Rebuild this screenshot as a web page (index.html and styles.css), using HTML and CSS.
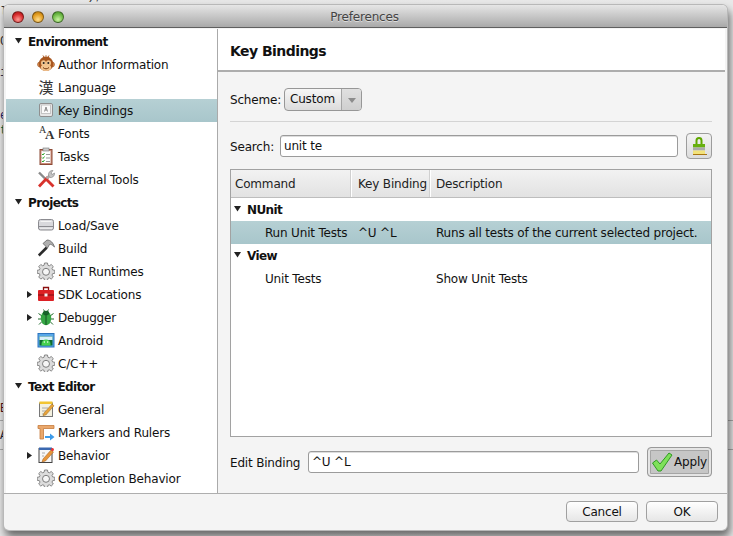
FILE: index.html
```html
<!DOCTYPE html>
<html lang="en">
<head>
<meta charset="utf-8">
<title>Preferences</title>
<link rel="stylesheet" href="styles.css">
</head>
<body>
<div class="desktop">
  <div class="bg-text bg-a">0 1 Failure);</div>
  <div class="bg-text bg-b">l</div>
  <div class="bg-text bg-c">C</div>
  <div class="bg-text bg-d">i</div>
  <div class="bg-text bg-e">e</div>
  <div class="bg-text bg-f">t</div>
  <div class="bg-text bg-g">E</div>
  <div class="bg-text bg-h">A</div>
  <div class="bg-line bg-l1"></div>
  <div class="bg-line bg-l2"></div>

  <div class="window">
    <div class="titlebar">
      <div class="lights">
        <span class="light red"></span><span class="light yellow"></span><span class="light green"></span>
      </div>
      <div class="title">Preferences</div>
    </div>

    <div class="main">
      <nav class="sidebar">
        <div class="row group"><svg class="tri" viewBox="0 0 9 9"><path d="M1 2h7L4.500 7.500z"/></svg><b>Environment</b></div>
        <div class="row item">
          <svg class="ico" viewBox="0 0 18 18"><circle cx="2.800" cy="9.500" r="2.400" fill="#d98a4e" stroke="#8a4a1c" stroke-width=".5"/><circle cx="15.200" cy="9.500" r="2.400" fill="#d98a4e" stroke="#8a4a1c" stroke-width=".5"/><circle cx="9" cy="8.800" r="7.300" fill="#a8561f"/><path d="M7 2L6 .5M9 1.500V.3M11 2l1-1.500" stroke="#a8561f"/><ellipse cx="6.500" cy="8" rx="2.500" ry="2.800" fill="#f3c48f"/><ellipse cx="11.500" cy="8" rx="2.500" ry="2.800" fill="#f3c48f"/><ellipse cx="9" cy="12.500" rx="5.200" ry="3.400" fill="#f3c48f"/><circle cx="6.700" cy="8" r="1" fill="#222"/><circle cx="11.300" cy="8" r="1" fill="#222"/><path d="M6 12.500c1.800 1.800 4.200 1.800 6 0" stroke="#7a3a10" fill="none"/></svg>
          <span>Author Information</span></div>
        <div class="row item"><span class="ico glyph-han">漢</span><span>Language</span></div>
        <div class="row item selected">
          <svg class="ico" viewBox="0 0 18 18"><rect x="2.500" y="2.500" width="13" height="13" rx="1.500" fill="#e6e6e6" stroke="#8f8f8f"/><rect x="4.500" y="4" width="9" height="8.500" fill="#fafafa" stroke="#c4c4c4"/><path d="M7.500 10.500L9 6l1.500 4.500M8 9h2" fill="none" stroke="#777" stroke-width=".8"/></svg>
          <span>Key Bindings</span></div>
        <div class="row item"><span class="ico glyph-aa"><i>A</i><em>A</em></span><span>Fonts</span></div>
        <div class="row item">
          <svg class="ico" viewBox="0 0 18 18"><rect x="3" y="2.500" width="12" height="15" fill="#c98b78" stroke="#8c4a36"/><rect x="4.500" y="4" width="9" height="12" fill="#fff"/><rect x="6" y="1" width="6" height="3" fill="#ccc" stroke="#777" stroke-width=".6"/><path d="M5 7l1 1 1.500-2M5 10.500l1 1 1.500-2M5 14l1 1 1.500-2" fill="none" stroke="#2aa52a"/><path d="M9 7.500h4M9 11h4M9 14.500h4" stroke="#999"/></svg>
          <span>Tasks</span></div>
        <div class="row item">
          <svg class="ico" viewBox="0 0 18 18"><path d="M2 2.500l6 6" stroke="#8a8a8a" stroke-width="2.400"/><path d="M9 9l7.500 7.500" stroke="#d8322c" stroke-width="2.800"/><path d="M11 7L2 16.500" stroke="#d8322c" stroke-width="2.800"/><path d="M14.500 3.500L9.500 8.500" stroke="#aaa" stroke-width="2.400"/><path d="M11.500 5a4 4 0 0 1 4.500-4.500l-2 2.500 1 1.500 2.500-1.500a4 4 0 0 1-5 4.500z" fill="#c4c4c4" stroke="#808080" stroke-width=".6"/></svg>
          <span>External Tools</span></div>

        <div class="row group"><svg class="tri" viewBox="0 0 9 9"><path d="M1 2h7L4.500 7.500z"/></svg><b>Projects</b></div>
        <div class="row item">
          <svg class="ico" viewBox="0 0 18 18"><rect x="1.500" y="3.500" width="15" height="10.500" rx="2" fill="#d8d8dc" stroke="#8b8b90"/><path d="M2 10.500h14" stroke="#8b8b90"/><path d="M3.500 5.500h11" stroke="#f4f4f4"/><path d="M3 12.300h12" stroke="#eee"/></svg>
          <span>Load/Save</span></div>
        <div class="row item">
          <svg class="ico" viewBox="0 0 18 18"><path d="M1.800 16.500l8-8" stroke="#2b2b2b" stroke-width="2.600"/><path d="M6 4.500L10 1c3.500 0 6 2.500 7.500 7-2.500-2.500-4-3-5-2.500l-2 3.500z" fill="#b0b0b0" stroke="#555" stroke-width=".7"/></svg>
          <span>Build</span></div>
        <div class="row item">
          <svg class="ico" viewBox="0 0 18 18"><use href="#gear"/></svg>
          <span>.NET Runtimes</span></div>
        <div class="row item has-child">
          <svg class="tri side" viewBox="0 0 9 9"><path d="M2 1v7l5-3.500z"/></svg>
          <svg class="ico" viewBox="0 0 18 18"><path d="M6.500 5V2.500h5V5" fill="none" stroke="#8c1010" stroke-width="1.300"/><rect x="1" y="5" width="16" height="11" rx="1" fill="#dc2024"/><path d="M1 10h16" stroke="#7e0d10"/><rect x="7.500" y="8.500" width="3" height="3" fill="#f3f3f3"/></svg>
          <span>SDK Locations</span></div>
        <div class="row item has-child">
          <svg class="tri side" viewBox="0 0 9 9"><path d="M2 1v7l5-3.500z"/></svg>
          <svg class="ico" viewBox="0 0 18 18"><path d="M1.500 5.500L5 8M16.500 5.500L13 8M1 11h4M17 11h-4M2 16.500L5 13.500M16 16.500L13 13.500M6.500 1.500L8 4M11.500 1.500L10 4" stroke="#1e6a2a"/><ellipse cx="9" cy="10.300" rx="5.200" ry="7" fill="#35a544"/><ellipse cx="9" cy="5" rx="3.200" ry="2.300" fill="#17622a"/><path d="M9 6v11" stroke="#125020"/></svg>
          <span>Debugger</span></div>
        <div class="row item">
          <svg class="ico" viewBox="0 0 18 18"><rect x="1" y="2.500" width="16" height="13.500" fill="#58a8e8" stroke="#2d74bd"/><rect x="2.500" y="5.500" width="13" height="9" fill="#0f6a30"/><rect x="2.500" y="5.500" width="13" height="3.500" fill="#d9f0fa"/><path d="M4.500 13a4.500 4.500 0 0 1 9 0z" fill="#45d04f"/><path d="M4.500 13h9v1.500h-9z" fill="#45d04f"/><circle cx="7.300" cy="11" r=".7" fill="#fff"/><circle cx="10.700" cy="11" r=".7" fill="#fff"/></svg>
          <span>Android</span></div>
        <div class="row item">
          <svg class="ico" viewBox="0 0 18 18"><use href="#gear"/></svg>
          <span>C/C++</span></div>

        <div class="row group"><svg class="tri" viewBox="0 0 9 9"><path d="M1 2h7L4.500 7.500z"/></svg><b>Text Editor</b></div>
        <div class="row item">
          <svg class="ico" viewBox="0 0 18 18"><rect x="2.500" y="3" width="13" height="13.500" fill="#f3f0df" stroke="#777"/><rect x="2.500" y="1.500" width="13" height="2.500" fill="#f2c531"/><path d="M5 8h6M5 11h4M5 14h5" stroke="#aaa"/><path d="M7 13l8-9 2 1.800-8 9-3 1z" fill="#e8a33a" stroke="#9a6a1c" stroke-width=".5"/></svg>
          <span>General</span></div>
        <div class="row item">
          <svg class="ico" viewBox="0 0 18 18"><path d="M1 2.500h16v3H6.500V16h-3.500V5.500H1z" fill="#eaa86c" stroke="#c67c3e" stroke-width=".8"/><path d="M8 13h5V10.500l4.500 3.500-4.500 3.500V15H8z" fill="#3d9be9"/></svg>
          <span>Markers and Rulers</span></div>
        <div class="row item has-child">
          <svg class="tri side" viewBox="0 0 9 9"><path d="M2 1v7l5-3.500z"/></svg>
          <svg class="ico" viewBox="0 0 18 18"><rect x="2" y="2.500" width="13" height="14" fill="#f7f7f7" stroke="#444"/><rect x="2" y="1.500" width="13" height="2.500" fill="#3b68b0"/><path d="M5 7h3M5 10h2" stroke="#aaa"/><path d="M6 13l8-9 2.500 2-8 9-3.500 1z" fill="#e8963a" stroke="#9a5a1c" stroke-width=".5"/><circle cx="15.500" cy="3.500" r="1.500" fill="#e33"/></svg>
          <span>Behavior</span></div>
        <div class="row item">
          <svg class="ico" viewBox="0 0 18 18"><use href="#gear"/></svg>
          <span>Completion Behavior</span></div>
      </nav>

      <section class="panel">
        <header class="panel-head">Key Bindings</header>
        <div class="panel-body">
          <div class="scheme-row">
            <span class="scheme-label">Scheme:</span>
            <div class="combo"><span class="combo-value">Custom</span><span class="combo-arrow"></span></div>
          </div>
          <div class="sep"></div>
          <div class="search-row">
            <label>Search:</label>
            <div class="field search-field">unit te</div>
            <button class="icon-btn" type="button">
              <svg viewBox="0 0 18 20" width="18" height="20"><path d="M6.500 7V3.500a2.500 2.500 0 0 1 5 0V7" fill="none" stroke="#5fa800" stroke-width="2"/><rect x="3" y="7" width="12" height="3.500" fill="#67b010"/><rect x="3" y="10.500" width="12" height="3" fill="#aaa"/><rect x="3" y="13.500" width="12" height="3.500" fill="#f2e27a"/><path d="M3 17.500h14" stroke="#a87410"/></svg>
            </button>
          </div>
          <div class="table">
            <div class="thead">
              <div class="th col-cmd">Command</div>
              <div class="th col-key">Key Binding</div>
              <div class="th col-desc">Description</div>
            </div>
            <div class="tr"><svg class="tri t-tri" viewBox="0 0 9 9"><path d="M1 2h7L4.500 7.500z"/></svg><b>NUnit</b></div>
            <div class="tr leaf selected"><span class="col-name">Run Unit Tests</span><span class="col-bind">^U ^L</span><span>Runs all tests of the current selected project.</span></div>
            <div class="tr"><svg class="tri t-tri" viewBox="0 0 9 9"><path d="M1 2h7L4.500 7.500z"/></svg><b>View</b></div>
            <div class="tr leaf"><span class="col-name">Unit Tests</span><span class="col-bind"></span><span>Show Unit Tests</span></div>
          </div>
          <div class="edit-row">
            <label>Edit Binding</label>
            <div class="field edit-field">^U ^L</div>
            <button class="apply" type="button">
              <svg viewBox="0 0 22 22" width="22" height="22"><path d="M1.500 12l4-3 3.500 4L18 2l3 2-11 16h-3z" fill="#7fe05a" stroke="#2f9a22"/></svg>
              <span>Apply</span>
            </button>
          </div>
        </div>
      </section>
    </div>

    <footer class="footer">
      <button class="btn" type="button">Cancel</button>
      <button class="btn" type="button">OK</button>
    </footer>
  </div>
</div>

<svg class="defs" width="0" height="0" aria-hidden="true">
  <defs>
    <g id="gear">
      <path d="M7.500 1h3l.4 2.200 1.400.6 1.900-1.300 2.100 2.100-1.300 1.900.6 1.400 2.200.4v3l-2.200.4-.6 1.400 1.300 1.900-2.100 2.100-1.900-1.300-1.400.6-.4 2.100h-3l-.4-2.100-1.400-.6-1.900 1.300-2.100-2.100 1.300-1.900-.6-1.400-2.200-.4v-3l2.200-.4.600-1.400-1.300-1.900 2.100-2.100 1.900 1.300 1.400-.6z" fill="#dcdcdc" stroke="#7c7c7c" stroke-width=".9"/>
      <circle cx="9" cy="9.800" r="3.500" fill="#f6f6f6" stroke="#7c7c7c"/>
    </g>
  </defs>
</svg>
</body>
</html>
```
FILE: styles.css
```css
* { box-sizing: border-box; }
html, body { margin: 0; height: 100%; }
body { font-family: "DejaVu Sans", sans-serif; font-size: 12px; letter-spacing: -0.18px; color: #111; overflow: hidden; }
b { letter-spacing: -0.6px; }
.defs { position: absolute; }

.desktop { position: relative; width: 733px; height: 536px; overflow: hidden;
  background: linear-gradient(90deg, #e6e6e6, #e9e9e9); }
.bg-text { position: absolute; font-family: "Liberation Mono", monospace; font-size: 12px; letter-spacing: 0; color: #333; }
.bg-a { left: 8px; top: -11px; }
.bg-b { left: 0; top: 5px; }
.bg-c { left: 0; top: 35px; }
.bg-d { left: 0; top: 66px; color: #335; }
.bg-e { left: 0; top: 109px; color: #226; }
.bg-f { left: 0; top: 124px; color: #164; }
.bg-g { left: 0; top: 402px; color: #511; }
.bg-h { left: 0; top: 429px; color: #223; }
.bg-line { position: absolute; left: 0; width: 733px; height: 1px; background: #aaa; }
.bg-l1 { top: 420px; }
.bg-l2 { top: 449px; }

.window { position: absolute; left: 4px; top: 5px; width: 723px; height: 525px; display: flex; flex-direction: column;
  background: #f4f4f4; border-radius: 5px; overflow: hidden;
  box-shadow: 0 0 0 1px #b8b8b8, 2px 6px 9px 1px rgba(0,0,0,.55); }

.titlebar { position: relative; height: 23px; flex: none; display: flex; align-items: center; justify-content: center;
  padding: 2px 2px 0 0; background: linear-gradient(#e6e6e6, #a9a9a9); border-bottom: 1px solid #5f5f5f; }
.title { font-size: 12px; color: #444; text-shadow: 0 1px 0 #ddd; }
.lights { position: absolute; left: 8px; top: 6px; display: flex; gap: 8px; }
.light { width: 12px; height: 12px; border-radius: 50%; border: 1px solid rgba(0,0,0,.4); }
.red { background: radial-gradient(circle at 50% 75%, #ff9a94, #d5292b 60%, #9f1414); }
.yellow { background: radial-gradient(circle at 50% 75%, #ffdc8a, #e09a1d 60%, #a86c0c); }
.green { background: radial-gradient(circle at 50% 75%, #c8f4a0, #6cb844 60%, #3f8a22); }

.main { flex: 1; display: flex; min-height: 0; padding: 1px 0 0 2px; border-bottom: 1px solid #aeaeae; }

.sidebar { width: 211px; flex: none; background: #fff; padding-top: 1px; }
.row { position: relative; height: 23px; display: flex; align-items: center; white-space: nowrap; }
.group { padding-left: 22px; }
.item { padding-left: 52px; }
.row.selected { background: linear-gradient(#b6d0d4, #a8c6cb); }
.tri { width: 9px; height: 9px; fill: #222; flex: none; }
.group .tri { position: absolute; left: 8px; top: 6px; }
.tri.side { position: absolute; left: 19px; top: 7px; }
.ico { position: absolute; left: 31px; top: 2px; width: 18px; height: 18px; letter-spacing: 0; }
.glyph-han { font-family: "Noto Sans CJK JP", sans-serif; font-size: 15px; line-height: 18px; text-align: center; color: #333; }
.glyph-aa { font-family: "Liberation Serif", serif; color: #333; }
.glyph-aa i { position: absolute; left: 2px; top: 0; font-style: normal; font-size: 10px; line-height: 12px; }
.glyph-aa em { position: absolute; left: 8px; top: 3px; font-style: normal; font-size: 13px; line-height: 15px; font-weight: bold; }

.panel { flex: 1; display: flex; flex-direction: column; min-width: 0; border-left: 1px solid #aaa; }
.panel-head { height: 43px; flex: none; background: #fff; border-bottom: 2px solid #adadad; padding: 2px 0 0 12px; margin-right: 2px;
  display: flex; align-items: center; font-size: 14px; font-weight: bold; letter-spacing: -0.55px; }
.panel-body { flex: 1; padding: 16px 15px 0 12px; display: flex; flex-direction: column; }

.scheme-row { display: flex; align-items: center; height: 23px; }
.scheme-label { width: 54px; flex: none; }
.combo { display: flex; height: 23px; width: 78px; border: 1px solid #979797; border-radius: 4px; background: linear-gradient(#f6f6f6, #dcdcdc); }
.combo-value { flex: 1; padding-left: 5px; line-height: 21px; }
.combo-arrow { width: 20px; border-left: 1px solid #a5a5a5; position: relative; background: linear-gradient(#e0e0e0, #cfcfcf); border-radius: 0 3px 3px 0; }
.combo-arrow::after { content: ""; position: absolute; left: 6px; top: 9px; border: 4px solid transparent; border-top: 5px solid #8c8c8c; border-bottom: 0; }
.sep { height: 1px; background: #d4d4d4; margin-top: 10px; }

.search-row { display: flex; align-items: center; margin-top: 11px; height: 26px; }
.search-row label { width: 50px; flex: none; padding-top: 1px; }
.field { height: 22px; border: 1px solid #9b9b9b; border-radius: 3px; background: #fff; line-height: 21px; padding-left: 3px; box-shadow: inset 0 1px 0 #ddd; }
.search-field { flex: 1; }
.icon-btn { width: 26px; height: 26px; margin-left: 8px; padding: 2px 0 0; border: 1px solid #9c9c9c; border-radius: 4px; background: linear-gradient(#f3f3f3, #dcdcdc); display: flex; align-items: center; justify-content: center; }

.table { margin-top: 10px; height: 268px; flex: none; background: #fff; border: 1px solid #a2a2a2; }
.thead { display: flex; height: 28px; background: linear-gradient(#f2f2f2, #e2e2e2); border-bottom: 1px solid #bdbdbd; line-height: 29px; color: #222; }
.th { padding-left: 4px; }
.col-cmd { width: 120px; }
.col-key { width: 79px; border-left: 1px solid #fff; box-shadow: -1px 0 0 #d0d0d0; padding-left: 6px; }
.col-desc { flex: 1; border-left: 1px solid #fff; box-shadow: -1px 0 0 #d0d0d0; padding-left: 5px; }
.tr { position: relative; height: 23px; display: flex; align-items: center; padding-left: 16px; white-space: nowrap; }
.t-tri { position: absolute; left: 2px; top: 6px; }
.tr.leaf { padding-left: 34px; }
.tr.selected { background: linear-gradient(#b6d0d4, #a8c6cb); }
.col-name { width: 93px; flex: none; }
.col-bind { width: 78px; flex: none; }

.edit-row { display: flex; align-items: center; margin-top: 10px; height: 30px; }
.edit-row label { width: 78px; flex: none; padding-top: 2px; }
.edit-field { flex: 1; }
.apply { width: 65px; height: 30px; margin-left: 8px; padding: 0 0 0 3px; border: 1px solid #999; border-radius: 4px; background: #c6c6c6; box-shadow: inset 0 0 0 2px #e4e4e4, inset 0 0 0 3px #a5a5a5; display: flex; align-items: center; gap: 1px; font: inherit; letter-spacing: inherit; color: #111; }

.footer { height: 36px; flex: none; display: flex; justify-content: flex-end; gap: 8px; padding: 7px 9px 0 0; }
.btn { width: 72px; height: 21px; padding: 0; border: 1px solid #a0a0a0; border-radius: 4px; background: linear-gradient(#fff, #e6e6e6); font: inherit; letter-spacing: inherit; color: #111; }
```
